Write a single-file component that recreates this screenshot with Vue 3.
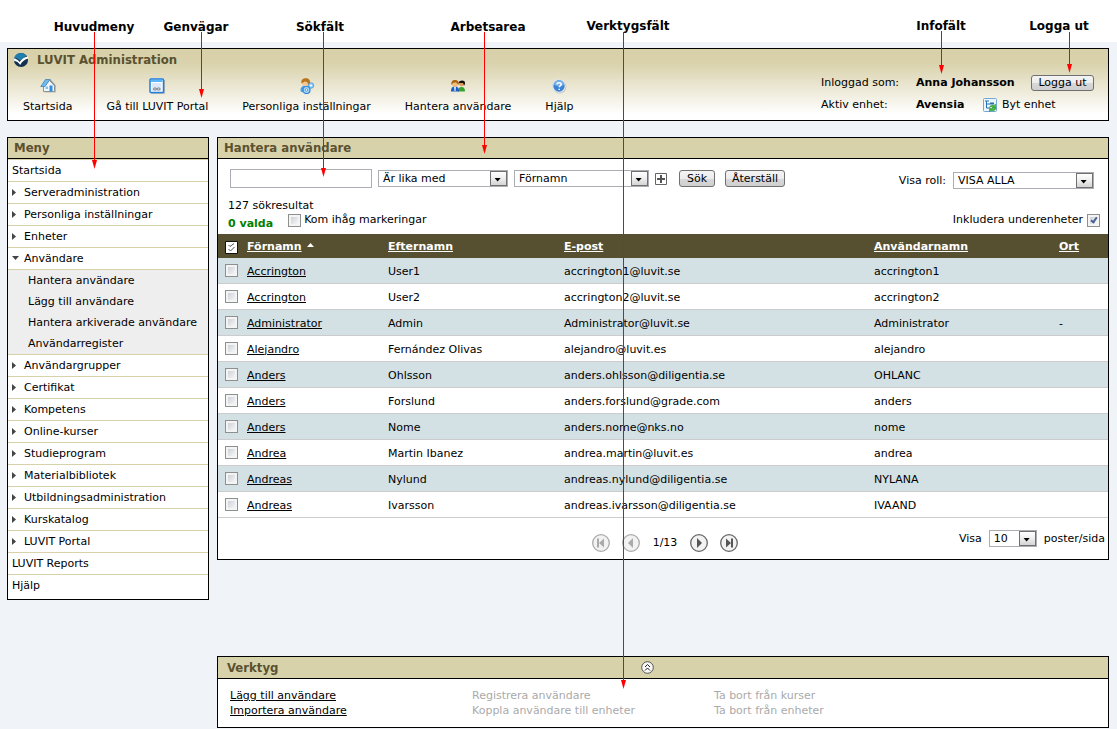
<script setup>
import { ref } from 'vue'

const notes = [
  { text: 'Huvudmeny', x: 94, y: 27, from: 32, to: 169 },
  { text: 'Genvägar', x: 196, y: 27, from: 32, to: 98, line: 201 },
  { text: 'Sökfält', x: 320, y: 27, from: 32, to: 177, line: 323 },
  { text: 'Arbetsarea', x: 488, y: 27, from: 32, to: 154, line: 484 },
  { text: 'Verktygsfält', x: 628, y: 26, from: 32, to: 689, line: 623 },
  { text: 'Infofält', x: 941, y: 26, from: 31, to: 74 },
  { text: 'Logga ut', x: 1059, y: 26, from: 32, to: 73, line: 1069 },
]

const shortcuts = [
  { icon: 'home', label: 'Startsida' },
  { icon: 'portal', label: 'Gå till LUVIT Portal' },
  { icon: 'settings', label: 'Personliga inställningar' },
  { icon: 'users', label: 'Hantera användare' },
  { icon: 'help', label: 'Hjälp' },
]

const menu = [
  { label: 'Startsida' },
  { label: 'Serveradministration', arrow: 'closed' },
  { label: 'Personliga inställningar', arrow: 'closed' },
  { label: 'Enheter', arrow: 'closed' },
  {
    label: 'Användare',
    arrow: 'open',
    children: ['Hantera användare', 'Lägg till användare', 'Hantera arkiverade användare', 'Användarregister'],
  },
  { label: 'Användargrupper', arrow: 'closed' },
  { label: 'Certifikat', arrow: 'closed' },
  { label: 'Kompetens', arrow: 'closed' },
  { label: 'Online-kurser', arrow: 'closed' },
  { label: 'Studieprogram', arrow: 'closed' },
  { label: 'Materialbibliotek', arrow: 'closed' },
  { label: 'Utbildningsadministration', arrow: 'closed' },
  { label: 'Kurskatalog', arrow: 'closed' },
  { label: 'LUVIT Portal', arrow: 'closed' },
  { label: 'LUVIT Reports' },
  { label: 'Hjälp' },
]

const rows = [
  ['Accrington', 'User1', 'accrington1@luvit.se', 'accrington1', ''],
  ['Accrington', 'User2', 'accrington2@luvit.se', 'accrington2', ''],
  ['Administrator', 'Admin', 'Administrator@luvit.se', 'Administrator', '-'],
  ['Alejandro', 'Fernández Olivas', 'alejandro@luvit.es', 'alejandro', ''],
  ['Anders', 'Ohlsson', 'anders.ohlsson@diligentia.se', 'OHLANC', ''],
  ['Anders', 'Forslund', 'anders.forslund@grade.com', 'anders', ''],
  ['Anders', 'Nome', 'anders.nome@nks.no', 'nome', ''],
  ['Andrea', 'Martin Ibanez', 'andrea.martin@luvit.es', 'andrea', ''],
  ['Andreas', 'Nylund', 'andreas.nylund@diligentia.se', 'NYLANA', ''],
  ['Andreas', 'Ivarsson', 'andreas.ivarsson@diligentia.se', 'IVAAND', ''],
]

const query = ref('')
const remember = ref(false)
const includeSub = ref(true)
</script>

<template>
  <div class="page">
    <div class="strip"></div>

    <header class="top">
      <div class="brand-side">
        <div class="brand">
          <svg class="logo" width="16" height="16" viewBox="0 0 16 16" aria-hidden="true">
            <circle cx="8" cy="8" r="7" fill="#12304f" />
            <path d="M1 7a7 7 0 0 1 12.500-3.300L7 8.500 3.500 6z" fill="#1f7fae" />
            <path d="M1 6.500C3 6.500 5 8 6.500 10 9 6.500 12 4.800 15 4.500c.3.800.4 1.500.3 2C12 7 9 9.500 7.200 13 5.500 10.500 3.500 9 1.200 9z" fill="#fff" />
          </svg>
          <h1>LUVIT Administration</h1>
        </div>
        <nav class="shortcuts">
          <a v-for="s in shortcuts" :key="s.label" href="#">
            <svg v-if="s.icon === 'home'" width="16" height="16" viewBox="0 0 16 16" aria-hidden="true">
              <path d="M4.500 8H16v6.500H4.500z" fill="#777" opacity=".4" />
              <path d="M3.500 7.500 9.500 2.500l5 5v6h-11z" fill="#f4f7fa" stroke="#8a929a" />
              <path d="M5.500 1.500h4.500L5 8.500H.8z" fill="#6fbcec" stroke="#3e82b8" stroke-width=".8" />
              <path d="M9.500 1.500 15.200 8" stroke="#8a929a" stroke-width="1.500" />
              <path d="M9.500 7.500h3V13.500h-3z" fill="#2f8fe0" />
              <path d="M5.500 8.500h2.500V11H5.500z" fill="#7cc5f2" />
            </svg>
            <svg v-else-if="s.icon === 'portal'" width="16" height="16" viewBox="0 0 16 16" aria-hidden="true">
              <path d="M2 2h14v14H2z" fill="#777" opacity=".45" />
              <rect x="1" y="1" width="13.500" height="13.500" rx="1" fill="#fff" stroke="#1d7fe0" stroke-width="1.500" />
              <path d="M2 2h11.500v2H2z" fill="#58b7fa" />
              <path d="M3 5h9.500v8H3z" fill="#dce9fb" />
              <ellipse cx="6" cy="11" rx="1.600" ry="1.100" fill="none" stroke="#666" stroke-width=".8" />
              <ellipse cx="9.600" cy="11" rx="1.600" ry="1.100" fill="none" stroke="#666" stroke-width=".8" />
            </svg>
            <svg v-else-if="s.icon === 'settings'" width="16" height="16" viewBox="0 0 16 16" aria-hidden="true">
              <path d="M2 14C.5 10.500 2.500 8 6 7.500l5 1.500v6z" fill="#4aa3ea" />
              <circle cx="6.800" cy="4.800" r="3.800" fill="#f6c690" />
              <path d="M2.600 5.500C1.500 2 4 .2 7 .2c3.300 0 4.800 2.500 3.800 6.300L9 7.500C9.300 5 8.300 3.500 5.500 3.500z" fill="#b8741a" />
              <circle cx="12" cy="7.500" r="2.800" fill="#8acbf6" stroke="#3784cc" stroke-width=".6" />
              <circle cx="7.500" cy="12" r="3.500" fill="#a8dbfa" stroke="#2f86d6" stroke-width="1.200" />
              <circle cx="7.500" cy="12" r="1.300" fill="#fff" stroke="#2878c8" stroke-width=".7" />
              <circle cx="12" cy="7.500" r="1" fill="#fff" />
            </svg>
            <svg v-else-if="s.icon === 'users'" width="16" height="16" viewBox="0 0 16 16" aria-hidden="true">
              <path d="M8 13.500c0-3 1-4.500 3.500-4.500S15 10.500 15 13.500z" fill="#37a32d" />
              <circle cx="11.800" cy="5.500" r="2.700" fill="#d99b5c" />
              <path d="M8.500 5C8.500 2.300 15 1.300 15 5c0 1.200-.4 2-.8 2.500L13 5z" fill="#111" />
              <path d="M1 13.500c0-3.500 1-5 4-5s4 1.500 4 5z" fill="#1c5fc4" />
              <path d="M4.200 9h1.600L5.500 13h-1z" fill="#fff" />
              <circle cx="5" cy="5.800" r="3" fill="#f4bd7c" />
              <path d="M1.500 7C.8 4 2.300 2 5 2s4.500 2 3.700 5L7.500 6 6 4.200 3 5z" fill="#a96516" />
            </svg>
            <svg v-else width="16" height="16" viewBox="0 0 16 16" aria-hidden="true">
              <circle cx="8.500" cy="8.800" r="6.800" fill="#888" opacity=".5" />
              <circle cx="8" cy="8" r="6.300" fill="#3b83d4" stroke="#dfe5ea" stroke-width="1.300" />
              <path d="M3 7a5 5 0 0 1 10 0C10 8.500 6 8.500 3 7" fill="#74adea" />
              <path d="M6 6.500C6 4.300 10.200 4.300 10.200 6.500 10.200 8 8.200 7.800 8.200 9.300M8.200 10.700v1.300" fill="none" stroke="#fff" stroke-width="1.500" />
            </svg>
            <span>{{ s.label }}</span>
          </a>
        </nav>
      </div>

      <div class="info">
        <span>Inloggad som:</span>
        <div class="info-cell">
          <strong>Anna Johansson</strong>
          <button type="button" class="btn small">Logga ut</button>
        </div>
        <span>Aktiv enhet:</span>
        <div class="info-cell unit">
          <strong>Avensia</strong>
          <a href="#">
            <svg width="14" height="14" viewBox="0 0 14 14" aria-hidden="true">
              <rect x=".5" y=".5" width="13" height="13" rx="1" fill="#eaf5fd" stroke="#72a9d4" />
              <path d="M2 3h4M3.500 3v7H7M3.500 6H7" fill="none" stroke="#2a6fb0" />
              <path d="M7 4.500h4v2H7z" fill="#2a6fb0" />
              <path d="M6.500 9.500C7 7.500 9 6.800 11 7.500L12.500 6v4H9l1-1M13 9.500C13 12 10.500 13.500 8 12.500L6.500 13.500V10.500H10" fill="#42b93d" stroke="#26862a" stroke-width=".5" />
            </svg>
            <span>Byt enhet</span>
          </a>
        </div>
      </div>
    </header>

    <div class="columns">
      <aside class="panel side">
        <h2>Meny</h2>
        <ul class="menu">
          <li v-for="m in menu" :key="m.label">
            <a href="#" class="item">
              <svg v-if="m.arrow === 'closed'" width="8" height="8" viewBox="0 0 8 8" aria-hidden="true"><path d="M0 0v7l4-3.500z" fill="#444" /></svg>
              <svg v-else-if="m.arrow === 'open'" width="8" height="8" viewBox="0 0 8 8" aria-hidden="true"><path d="M0 1h7L3.500 5z" fill="#444" /></svg>
              <span>{{ m.label }}</span>
            </a>
            <ul v-if="m.children" class="sub">
              <li v-for="c in m.children" :key="c"><a href="#">{{ c }}</a></li>
            </ul>
          </li>
        </ul>
      </aside>

      <main class="panel work">
        <h2>Hantera användare</h2>
        <form class="filters" @submit.prevent>
          <div class="filters-left">
            <div class="search">
              <input v-model="query" type="text" class="query" aria-label="Sökord" />
              <span class="select cond">
                <select aria-label="Villkor"><option>Är lika med</option></select>
                <svg width="17" height="15" viewBox="0 0 17 15" aria-hidden="true"><path d="M4 7h7L7.500 11z" /></svg>
              </span>
              <span class="select field">
                <select aria-label="Fält"><option>Förnamn</option></select>
                <svg width="17" height="15" viewBox="0 0 17 15" aria-hidden="true"><path d="M4 7h7L7.500 11z" /></svg>
              </span>
              <button type="button" class="plus" aria-label="Lägg till villkor">
                <svg width="12" height="12" viewBox="0 0 12 12"><path d="M.5.500h11v11H.5z" fill="#fff" stroke="#666" /><path d="M6 2v8M2 6h8" stroke="#555" stroke-width="2" /></svg>
              </button>
              <button type="submit" class="btn find">Sök</button>
              <button type="reset" class="btn">Återställ</button>
            </div>
            <p class="count">127 sökresultat</p>
            <div class="selected">
              <strong>0 valda</strong>
              <label><input v-model="remember" type="checkbox" class="check" /><span>Kom ihåg markeringar</span></label>
            </div>
          </div>
          <div class="filters-right">
            <label class="role">
              <span>Visa roll:</span>
              <span class="select all">
                <select><option>VISA ALLA</option></select>
                <svg width="17" height="15" viewBox="0 0 17 15" aria-hidden="true"><path d="M4 7h7L7.500 11z" /></svg>
              </span>
            </label>
            <label class="include"><span>Inkludera underenheter</span><input v-model="includeSub" type="checkbox" class="check" /></label>
          </div>
        </form>

        <table>
          <colgroup>
            <col class="c-check" /><col class="c-first" /><col class="c-last" /><col /><col class="c-user" /><col class="c-city" />
          </colgroup>
          <thead>
            <tr>
              <th>
                <button type="button" class="mark-all" aria-label="Markera alla">
                  <svg width="13" height="13" viewBox="0 0 13 13"><path d="M.5.500h12v12H.5z" fill="#fff" stroke="#111" /><path d="M3.500 4l1.500 1.500L9 2.500M3.500 8l2 2L9.500 6" fill="none" stroke="#555" /></svg>
                </button>
              </th>
              <th><a href="#">Förnamn</a><svg class="sort" width="7" height="4" viewBox="0 0 7 4" aria-hidden="true"><path d="M0 4h7L3.500 0z" fill="#fff" /></svg></th>
              <th><a href="#">Efternamn</a></th>
              <th><a href="#">E-post</a></th>
              <th><a href="#">Användarnamn</a></th>
              <th><a href="#">Ort</a></th>
            </tr>
          </thead>
          <tbody>
            <tr v-for="r in rows" :key="r[2]">
              <td><input type="checkbox" class="check" :aria-label="'Markera ' + r[3]" /></td>
              <td><a href="#">{{ r[0] }}</a></td>
              <td>{{ r[1] }}</td>
              <td>{{ r[2] }}</td>
              <td>{{ r[3] }}</td>
              <td>{{ r[4] }}</td>
            </tr>
          </tbody>
        </table>

        <div class="pager">
          <div class="pages">
            <button type="button" disabled aria-label="Första sidan">
              <svg width="18" height="18" viewBox="0 0 18 18"><circle cx="9" cy="9" r="8.300" /><path d="M5 4.500h2v9H5zM12 4.500v9L7 9z" /></svg>
            </button>
            <button type="button" disabled aria-label="Föregående sida">
              <svg width="18" height="18" viewBox="0 0 18 18"><circle cx="9" cy="9" r="8.300" /><path d="M11 4v10L6 9z" /></svg>
            </button>
            <span>1/13</span>
            <button type="button" aria-label="Nästa sida">
              <svg width="18" height="18" viewBox="0 0 18 18"><circle cx="9" cy="9" r="8.300" /><path d="M7 4v10L12 9z" /></svg>
            </button>
            <button type="button" aria-label="Sista sidan">
              <svg width="18" height="18" viewBox="0 0 18 18"><circle cx="9" cy="9" r="8.300" /><path d="M6 4.500v9l5-4.500zM11 4.500h2v9h-2z" /></svg>
            </button>
          </div>
          <label class="per-page">
            <span>Visa</span>
            <span class="select num">
              <select><option>10</option></select>
              <svg width="17" height="15" viewBox="0 0 17 15" aria-hidden="true"><path d="M4 7h7L7.500 11z" /></svg>
            </span>
            <span>poster/sida</span>
          </label>
        </div>
      </main>
    </div>

    <section class="panel tools">
      <div class="tools-head">
        <h2>Verktyg</h2>
        <button type="button" aria-label="Fäll ihop">
          <svg width="13" height="13" viewBox="0 0 13 13"><circle cx="6.500" cy="6.500" r="5.800" fill="#f7f7f4" stroke="#555" /><path d="M4 6l2.500-2.500L9 6M4 9.500 6.500 7 9 9.500" fill="none" stroke="#222" /></svg>
        </button>
      </div>
      <div class="tools-body">
        <div><a href="#">Lägg till användare</a><a href="#">Importera användare</a></div>
        <div><span>Registrera användare</span><span>Koppla användare till enheter</span></div>
        <div><span>Ta bort från kurser</span><span>Ta bort från enheter</span></div>
      </div>
    </section>

    <div class="notes">
      <svg width="100%" height="100%" aria-hidden="true">
        <g v-for="n in notes" :key="n.text" fill="#f00">
          <rect :x="n.line || n.x" :y="n.from" width="1" :height="n.to - n.from - 4" />
          <path :d="`M${(n.line || n.x) - 2} ${n.to - 9}h5l-2.500 9z`" />
        </g>
      </svg>
      <span v-for="n in notes" :key="n.text" class="note" :style="{ left: n.x + 'px', top: n.y + 'px' }">{{ n.text }}</span>
    </div>
  </div>
</template>

<style>
body {
  margin: 0;
  background: #f0f4f8;
}
</style>

<style scoped>
.page {
  position: relative;
  display: flex;
  flex-direction: column;
  box-sizing: border-box;
  min-height: 100vh;
  padding: 0 8px 1px 7px;
  font: 11px/14px "DejaVu Sans", Verdana, sans-serif;
  color: #000;
}
.page * { box-sizing: border-box; }
a { color: inherit; }
h1, h2, p, ul { margin: 0; padding: 0; }
ul { list-style: none; }
svg { display: block; flex: none; }
button, input, select { font: inherit; color: inherit; margin: 0; padding: 0; }
button { border: 0; background: none; }

.strip { height: 42px; margin: 0 -8px 6px -7px; background: #fff; }

.top {
  display: flex;
  justify-content: space-between;
  height: 73px;
  border: 1px solid #000;
  background: linear-gradient(#d8d0a8 0, #d9d2ac 20%, #fff 92%);
}
.brand { display: flex; align-items: center; gap: 8px; height: 22px; padding-left: 5px; }
h1, h2 {
  font: bold 13px/20px "DejaVu Sans Condensed", Tahoma, sans-serif;
  color: #5a5130;
}
.shortcuts { display: flex; gap: 34px; padding: 7px 0 0 15px; }
.shortcuts a {
  display: flex;
  flex-direction: column;
  align-items: center;
  gap: 6px;
  text-decoration: none;
  white-space: nowrap;
}
.info {
  display: grid;
  grid-template-columns: 95px auto;
  align-content: start;
  row-gap: 6px;
  padding: 26px 14px 0 0;
  line-height: 16px;
  white-space: nowrap;
}
.info-cell { display: flex; align-items: center; gap: 10px; }
.info-cell strong { min-width: 105px; }
.info-cell.unit { gap: 12px; }
.info-cell.unit strong { min-width: 55px; }
.info-cell a { display: flex; align-items: center; gap: 5px; text-decoration: none; }

.btn {
  height: 17px;
  padding: 0 6px;
  border: 1px solid #707070;
  border-radius: 3px;
  background: linear-gradient(#f4f4f4 0, #ececec 50%, #d8d8d8 51%, #cfcfcf 100%);
  line-height: 15px;
}
.btn.small { min-width: 63px; height: 16px; line-height: 14px; }

.columns {
  display: grid;
  grid-template-columns: 202px 1fr;
  gap: 8px;
  align-items: start;
  margin: 16px 0;
}
.panel { border: 1px solid #000; background: #fff; }
.panel h2 { padding-left: 6px; background: #d8d2ab; border-bottom: 1px solid #000; line-height: 20px; }

.menu { border-top: 1px solid #d8d2ab; padding-bottom: 2px; }
.menu > li { border-bottom: 1px solid #d8d2ab; }
.menu > li:last-child { border-bottom: 0; padding-bottom: 1px; }
.item {
  display: flex;
  align-items: center;
  gap: 4px;
  height: 21px;
  padding: 1px 0 0 4px;
  text-decoration: none;
}
.sub { border-top: 1px solid #d8d2ab; background: #eee; }
.sub a {
  display: block;
  padding: 1px 0 0 20px;
  line-height: 20px;
  text-decoration: none;
  white-space: nowrap;
}

.filters { display: flex; justify-content: space-between; height: 75px; padding: 10px 8px 0 10px; }
.search { display: flex; align-items: center; gap: 6px; padding-left: 2px; }
.query { width: 142px; height: 19px; border: 1px solid #abadb3; padding: 0 3px; background: #fff; }
.select { position: relative; display: inline-block; height: 17px; }
.select select {
  display: block;
  width: 100%;
  height: 17px;
  padding: 0 18px 0 4px;
  border: 1px solid #abadb3;
  border-radius: 0;
  background: #fff;
  appearance: none;
  line-height: 15px;
}
.select svg {
  position: absolute;
  top: 1px;
  right: 1px;
  border: 1px solid #707070;
  background: linear-gradient(#fff 0, #eee 50%, #d4d4d4 100%);
  pointer-events: none;
}
.cond { width: 130px; }
.field { width: 135px; }
.all { width: 141px; }
.num { width: 48px; }
.find { min-width: 36px; margin: 0 4px 0 6px; }
.count { margin-top: 11px; line-height: 14px; }
.selected { display: flex; gap: 15px; }
.selected strong { color: #008000; line-height: 22px; }
.selected label { display: flex; gap: 3px; padding-top: 1px; line-height: 12px; }
.filters-right { display: flex; flex-direction: column; align-items: flex-end; gap: 25px; padding-top: 3px; }
.role { display: flex; align-items: center; gap: 7px; margin-right: 6px; }
.include { display: flex; gap: 4px; line-height: 12px; }

.check {
  flex: none;
  display: block;
  width: 13px;
  height: 13px;
  border: 1px solid #8e8f8f;
  background: linear-gradient(135deg, #cdd1d8, #f6f6f6) content-box;
  padding: 2px;
  box-shadow: inset 0 0 0 2px #f4f4f4;
  appearance: none;
}
.check:checked::after {
  content: "";
  display: block;
  width: 2px;
  height: 5px;
  margin: -1px 0 0 2px;
  border: solid #4a5f97;
  border-width: 0 2px 2px 0;
  transform: rotate(35deg);
}

table { width: 100%; border-spacing: 0; table-layout: fixed; }
.c-check { width: 29px; }
.c-first { width: 141px; }
.c-last { width: 176px; }
.c-user { width: 185px; }
.c-city { width: 49px; }
th, td { padding: 2px 0 0; text-align: left; white-space: nowrap; }
th { height: 24px; background: #565030; color: #fff; }
td { height: 26px; border-bottom: 1px solid #ccc; }
tbody tr:nth-child(odd) { background: #d3e0e4; }
th:first-child { padding-left: 7px; }
td:first-child { padding: 0 0 0 7px; }
.mark-all { display: block; }
.sort { display: inline-block; margin: 0 0 3px 5px; }

.pager {
  display: grid;
  grid-template-columns: 1fr auto 1fr;
  align-items: start;
  height: 41px;
  padding: 12px 3px 0 7px;
}
.pages { grid-column: 2; display: flex; align-items: center; gap: 12px; padding: 4px 0 0; }
.pages span { margin: 0 1px; }
.pages circle { fill: #f2f2f2; stroke: #666; stroke-width: 1.300; }
.pages path { fill: #555; }
.pages button:disabled circle { stroke: #aaa; }
.pages button:disabled path { fill: #aaa; }
.per-page { justify-self: end; display: flex; align-items: center; gap: 7px; }

.tools { margin: auto 0 0 210px; }
.tools-head {
  display: grid;
  grid-template-columns: 1fr auto 1fr;
  align-items: center;
  height: 22px;
  padding-right: 31px;
  background: #d8d2ab;
  border-bottom: 1px solid #000;
}
.tools-head h2 { border: 0; padding-left: 9px; }
.tools-body {
  display: grid;
  grid-template-columns: 242px 242px 1fr;
  height: 48px;
  padding: 9px 12px 0;
  line-height: 15px;
}
.tools-body div { display: flex; flex-direction: column; align-items: flex-start; }
.tools-body span { color: #aaa; }

.notes { position: absolute; inset: 0; overflow: hidden; pointer-events: none; }
.notes svg { position: absolute; inset: 0; }
.note {
  position: absolute;
  transform: translate(-50%, -50%);
  font-size: 12px;
  font-weight: bold;
  white-space: nowrap;
}
</style>
